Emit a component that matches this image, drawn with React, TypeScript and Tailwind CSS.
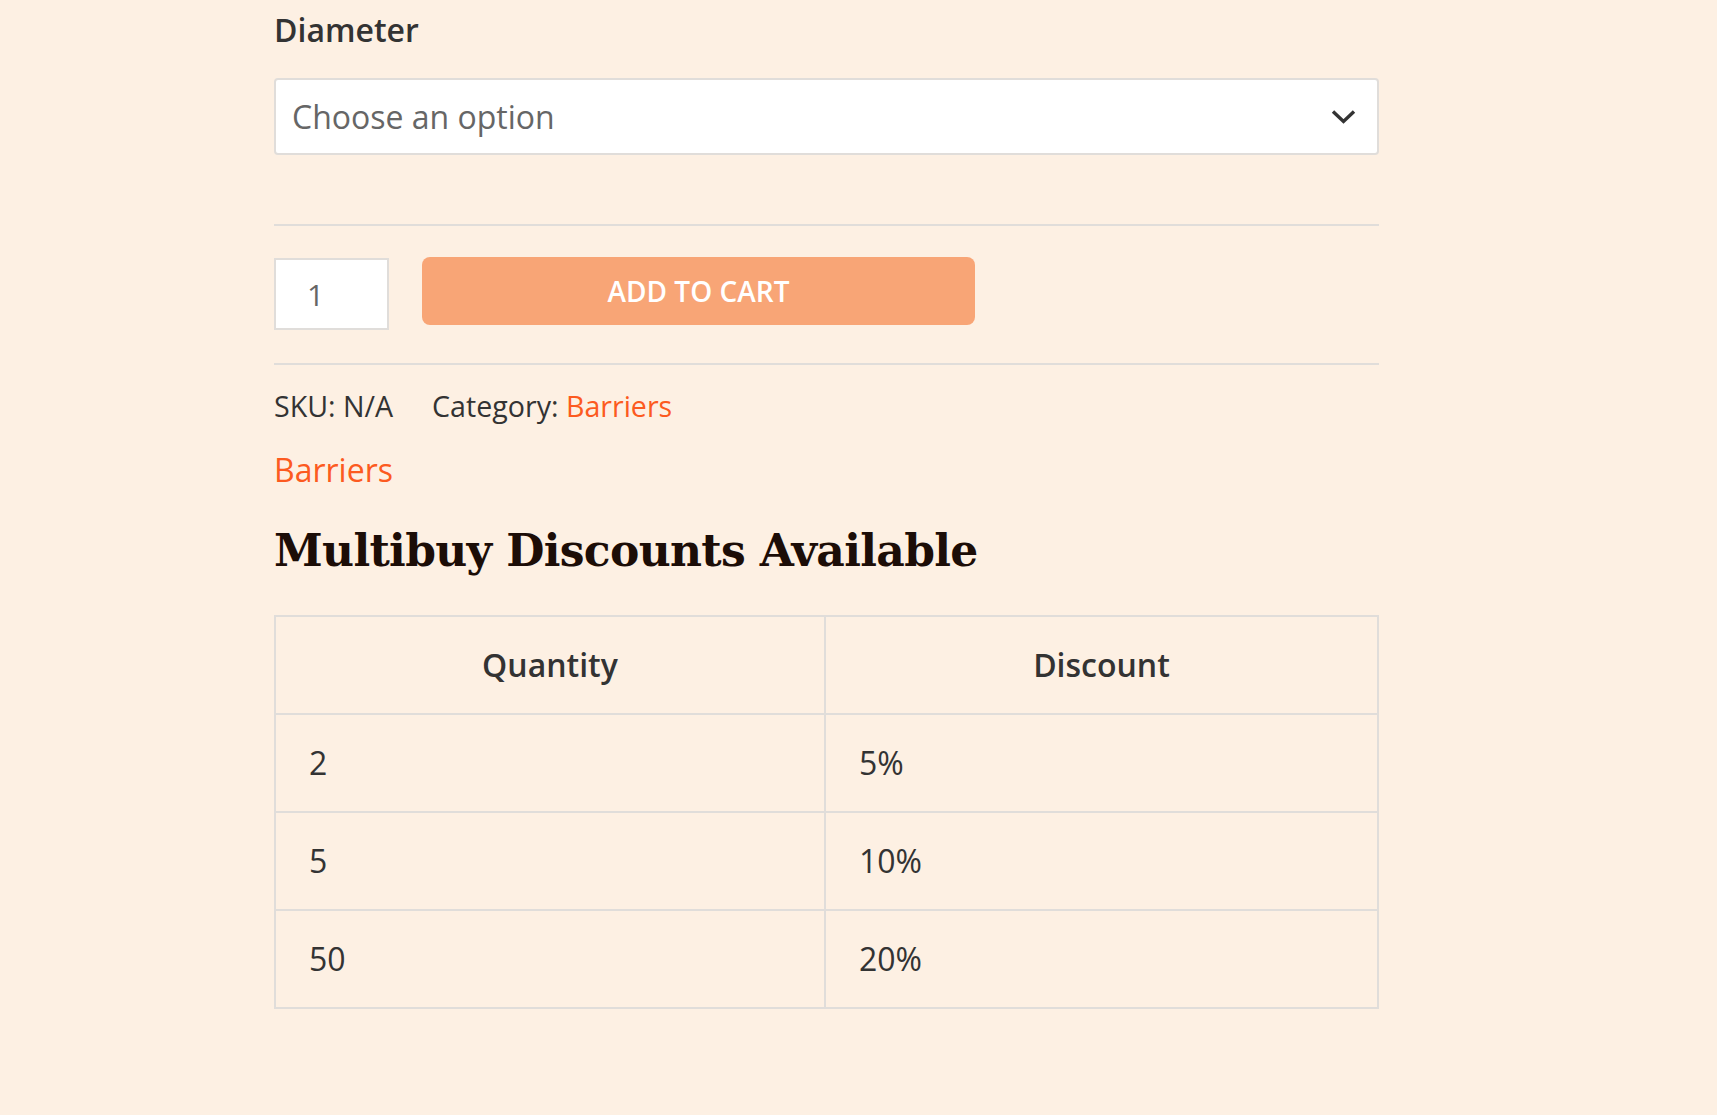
import React from "react";

const rows = [
  ["2", "5%"],
  ["5", "10%"],
  ["50", "20%"],
];

export default function App() {
  return (
    <div className="min-h-[1115px] w-full bg-[#fdf0e3] text-[#333333]" style={{ fontFamily: "'Open Sans', 'Noto Sans', sans-serif" }}>
      <div className="ml-[274px] w-[1105px] pt-[6px]">
        <div className="h-[48px] text-[32px] font-semibold leading-[48px] text-[#333333]">Diameter</div>

        <div className="mt-[24px] flex h-[77px] items-center justify-between rounded-[4px] border-2 border-[#e0ddda] bg-white pl-[16px] pr-[21px]">
          <span className="text-[32px] leading-[48px] text-[#666666]">Choose an option</span>
          <svg width="25" height="15" viewBox="0 0 25 15" fill="none">
            <polyline points="2,2.5 12.5,12.5 23,2.5" stroke="#333333" strokeWidth="3.4" strokeLinecap="butt" strokeLinejoin="miter" />
          </svg>
        </div>

        <div className="mt-[69px] h-[2px] bg-[#e0ddda]" />

        <div className="mt-[31px] flex items-start gap-[33px]">
          <div className="mt-[1px] flex h-[72px] w-[115px] items-center border-2 border-[#e0ddda] bg-white pl-[31px] text-[30px] text-[#666666]">
            1
          </div>
          <button className="flex h-[68px] w-[553px] items-center justify-center rounded-[8px] bg-[#f8a576] text-[28px] font-semibold text-white">
            ADD TO CART
          </button>
        </div>

        <div className="mt-[33px] h-[2px] bg-[#e0ddda]" />

        <div className="mt-[19px] flex h-[44px] items-center text-[28.6px] leading-[44px] text-[#333333]">
          <span>SKU: N/A</span>
          <span className="ml-[39px]">
            Category: <a className="text-[#fc5a20]">Barriers</a>
          </span>
        </div>

        <div className="mt-[18px] h-[48px] text-[32px] leading-[48px] text-[#fc5a20]">Barriers</div>

        <h2
          className="mt-[30px] h-[53px] text-[44px] font-bold leading-[53px] tracking-[-0.015em] text-[#1c0d07]"
          style={{ fontFamily: "'DejaVu Serif', 'Liberation Serif', serif" }}
        >
          Multibuy Discounts Available
        </h2>

        <div className="mt-[38px] grid grid-cols-[550px_1fr] border-l-2 border-t-2 border-[#e0ddda]">
          <div className="flex h-[98px] items-center justify-center border-b-2 border-r-2 border-[#e0ddda] text-[32px] font-semibold text-[#333333]">
            Quantity
          </div>
          <div className="flex h-[98px] items-center justify-center border-b-2 border-r-2 border-[#e0ddda] text-[32px] font-semibold text-[#333333]">
            Discount
          </div>
          {rows.map(([q, d]) => (
            <React.Fragment key={q}>
              <div className="flex h-[98px] items-center border-b-2 border-r-2 border-[#e0ddda] pl-[33px] text-[32px] text-[#333333]">
                {q}
              </div>
              <div className="flex h-[98px] items-center border-b-2 border-r-2 border-[#e0ddda] pl-[33px] text-[32px] text-[#333333]">
                {d}
              </div>
            </React.Fragment>
          ))}
        </div>
      </div>
    </div>
  );
}
